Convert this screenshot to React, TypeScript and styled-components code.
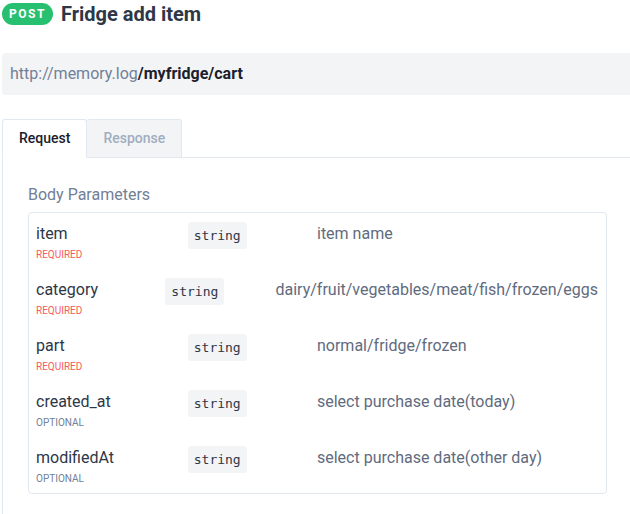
import styled, { createGlobalStyle } from "styled-components";

const GlobalStyle = createGlobalStyle`
  body {
    margin: 0;
    overflow: hidden;
    background: #ffffff;
    font-family: Roboto, "Liberation Sans", sans-serif;
    color: #2d3748;
  }
`;

const Page = styled.div`
  width: 631px;
  margin-left: 2px;
`;

const Header = styled.div`
  display: flex;
  align-items: center;
  gap: 8px;
  height: 28px;
`;

const MethodBadge = styled.span`
  display: inline-flex;
  align-items: center;
  justify-content: center;
  height: 22px;
  width: 51px;
  border-radius: 11px;
  background: #27c070;
  color: #ffffff;
  font-size: 12px;
  font-weight: 700;
  letter-spacing: 1.5px;
`;

const Title = styled.h1`
  margin: 0;
  font-size: 20px;
  line-height: 28px;
  font-weight: 700;
  color: #2d3748;
`;

const UrlBar = styled.div`
  margin-top: 25px;
  height: 42px;
  display: flex;
  align-items: center;
  padding: 0 8px 2px;
  box-sizing: border-box;
  background: #f3f4f6;
  border-radius: 3px;
  font-size: 16px;
  color: #718096;
`;

const UrlPath = styled.span`
  font-weight: 700;
  color: #1a202c;
`;

const TabList = styled.div`
  margin-top: 24px;
  display: flex;
  border-bottom: 1px solid #e2e8f0;
`;

interface TabProps {
  $active?: boolean;
}
const Tab = styled.div<TabProps>`
  height: 39px;
  box-sizing: border-box;
  display: flex;
  align-items: center;
  padding: 0 16px 1px;
  margin-bottom: -1px;
  border: 1px solid #e2e8f0;
  border-bottom-color: ${({ $active }) => ($active ? "#ffffff" : "#e2e8f0")};
  border-radius: 3px 3px 0 0;
  background: ${({ $active }) => ($active ? "#ffffff" : "#f3f4f6")};
  color: ${({ $active }) => ($active ? "#1a202c" : "#a0aec0")};
  font-size: 14px;
  font-weight: 500;
  & + & {
    border-left: none;
  }
`;

const Panel = styled.div`
  border: 1px solid #e2e8f0;
  border-top: none;
  padding: 25px 25px;
`;

const SectionTitle = styled.div`
  font-size: 16px;
  line-height: 24px;
  color: #718096;
  margin-bottom: 5px;
`;

const Params = styled.div`
  border: 1px solid #e2e8f0;
  border-radius: 4px;
`;

const Row = styled.div`
  display: flex;
  align-items: flex-start;
  padding: 9px 8px 8px 7px;
`;

const NameCell = styled.div`
  flex: 0 1 27%;
  min-width: 0;
`;

const Name = styled.div`
  font-size: 16px;
  line-height: 24px;
  color: #2d3748;
`;

interface FlagProps {
  $required: boolean;
}
const Flag = styled.div<FlagProps>`
  margin-top: 3px;
  font-size: 10px;
  line-height: 12px;
  text-transform: uppercase;
  color: ${({ $required }) => ($required ? "#f45b5b" : "#718096")};
`;

const TypeCell = styled.div`
  flex: 0 1 23%;
  min-width: 0;
`;

const TypeTag = styled.code`
  display: inline-block;
  padding: 6px 6px;
  border-radius: 3px;
  background: #f3f4f6;
  font-family: "DejaVu Sans Mono", "Liberation Mono", monospace;
  font-size: 13px;
  line-height: 15px;
  color: #2d3748;
`;

const Desc = styled.div`
  flex: 0 1 50%;
  white-space: nowrap;
  font-size: 16px;
  line-height: 24px;
  color: #5f6b7e;
`;

interface Param {
  name: string;
  type: string;
  required: boolean;
  desc: string;
}

const params: Param[] = [
  { name: "item", type: "string", required: true, desc: "item name" },
  {
    name: "category",
    type: "string",
    required: true,
    desc: "dairy/fruit/vegetables/meat/fish/frozen/eggs",
  },
  { name: "part", type: "string", required: true, desc: "normal/fridge/frozen" },
  { name: "created_at", type: "string", required: false, desc: "select purchase date(today)" },
  { name: "modifiedAt", type: "string", required: false, desc: "select purchase date(other day)" },
];

export default function App() {
  return (
    <Page>
      <GlobalStyle />
      <Header>
        <MethodBadge>POST</MethodBadge>
        <Title>Fridge add item</Title>
      </Header>
      <UrlBar>
        http://memory.log<UrlPath>/myfridge/cart</UrlPath>
      </UrlBar>
      <TabList>
        <Tab $active>Request</Tab>
        <Tab>Response</Tab>
      </TabList>
      <Panel>
        <SectionTitle>Body Parameters</SectionTitle>
        <Params>
          {params.map((p) => (
            <Row key={p.name}>
              <NameCell>
                <Name>{p.name}</Name>
                <Flag $required={p.required}>{p.required ? "required" : "optional"}</Flag>
              </NameCell>
              <TypeCell>
                <TypeTag>{p.type}</TypeTag>
              </TypeCell>
              <Desc>{p.desc}</Desc>
            </Row>
          ))}
        </Params>
      </Panel>
    </Page>
  );
}
